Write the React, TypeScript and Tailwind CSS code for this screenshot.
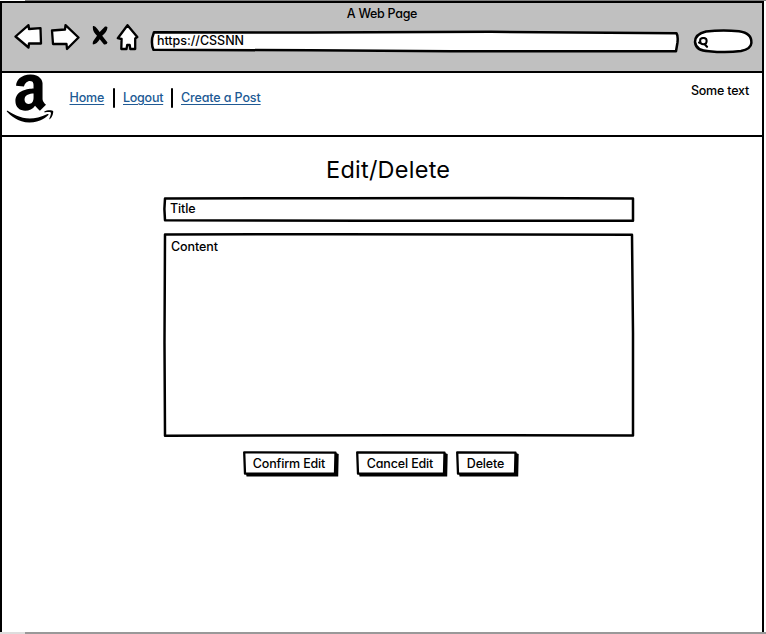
import type { ReactNode } from "react";
import { FaAmazon } from "react-icons/fa";

type OutlineProps = { w: number; h: number; d: string; stroke?: number; fill?: string };

// Hand-drawn frame placed behind the content of a control.
function Outline({ w, h, d, stroke = 2.5, fill = "white" }: OutlineProps) {
  return (
    <svg
      className="pointer-events-none absolute inset-0 overflow-visible"
      width={w}
      height={h}
      viewBox={`0 0 ${w} ${h}`}
      aria-hidden="true"
    >
      <path d={d} fill={fill} stroke="black" strokeWidth={stroke} strokeLinejoin="round" strokeLinecap="round" />
    </svg>
  );
}

function NavIcon({ d, className, w, h }: { d: string; className: string; w: number; h: number }) {
  return (
    <svg className={className} width={w} height={h} viewBox={`0 0 ${w} ${h}`} aria-hidden="true">
      <path d={d} fill="white" stroke="black" strokeWidth="2.3" strokeLinejoin="round" />
    </svg>
  );
}

function BrowserBar() {
  return (
    <header className="h-[70px] border-b-2 border-black bg-[#c0c0c0]">
      <div className="flex h-[21px] items-center justify-center pt-px">
        <span className="tracking-[-0.3px]">A Web Page</span>
      </div>
      <div className="flex h-[36px] items-start">
        <NavIcon className="ml-[12px]" w={29} h={27} d="M1.5 12.5 L14.5 1.2 L15 5 L26.5 4.2 L27 19.5 L15 19.5 L14.5 23.5 Z" />
        <NavIcon className="ml-[7px]" w={30} h={28} d="M2 6.5 L15 5.5 L15.5 1.2 L28.5 13.5 L17 25 L16.5 20 L3 20 Z" />
        <svg className="mt-[2px] ml-[11px]" width="18" height="20" viewBox="0 0 18 20" aria-hidden="true">
          <path d="M2 0 Q4 -.3 6 2.5 L8.7 6 L14 .5 Q16 0 16.5 1.5 Q16 6 11.2 9.7 L16.5 16.5 Q16 19 13 18.5 L8.7 13.2 Q6 18 2 18.5 Q1.3 17.5 2.3 15 L6 9.7 Q1 5 2 0Z" />
        </svg>
        <NavIcon className="ml-[7px]" w={24} h={28} d="M11.5 1.2 L21.3 13 L19.2 14.5 L19.2 25 L14.3 25 L13.7 21 L11.2 21 L10.5 25 L5.3 25 L5.6 15 L1.8 14.2 Z" />
        <div className="relative mt-[7px] ml-[11px] flex h-[21px] w-[528px] items-center pb-[2px] pl-[6px]">
          <Outline w={528} h={21} d="M3 1.2 L160 1.5 L340 .8 L525.5 2.3 Q527.3 5 526.4 12 L525 20.3 L300 20.2 L160 19.3 L2.5 18.8 Q.3 15 1.2 7Z" />
          <span className="relative tracking-[-0.03px]">https://CSSNN</span>
        </div>
        <div className="relative mt-[5px] ml-[15px] h-[24px] w-[59px]">
          <Outline w={59} h={24} d="M12 2.5 Q28 .6 45 2.2 Q58 4 57.4 14 Q57 20 47 22 Q32 24 15 22.2 Q2 22 1 13 Q1 5 12 2.5Z" />
          <svg className="relative mt-[8px] ml-[4px]" width="12" height="13" viewBox="0 0 12 13" aria-hidden="true">
            <path d="M2.6 1.8 Q5.5 .2 8 1.8 Q9.2 4 8 6.3 Q5 8.2 2.8 6.3 L1 5.6 M2.8 6.3 Q1.6 4 2.6 1.8 M6.6 7.2 L9 9.8" fill="none" stroke="black" strokeWidth="2.1" strokeLinecap="round" />
          </svg>
        </div>
      </div>
    </header>
  );
}

function SiteHeader() {
  return (
    <nav className="flex h-[64px] items-start border-b-2 border-black">
      <FaAmazon className="mt-[-2px] ml-[4px] h-[55px] w-[48px] shrink-0" />
      <div className="mt-[15px] ml-[15.5px] flex h-[20px] items-center text-[#205a94]">
        <a className="w-[35px] tracking-[-0.15px] whitespace-nowrap underline underline-offset-2">Home</a>
        <i className="ml-[8.5px] h-[20px] w-[2px] rounded bg-black" />
        <a className="ml-[8px] w-[41px] tracking-[-0.25px] whitespace-nowrap underline underline-offset-2">Logout</a>
        <i className="ml-[7px] h-[20px] w-[2px] rounded bg-black" />
        <a className="ml-[8px] tracking-[-0.12px] whitespace-nowrap underline underline-offset-2">Create a Post</a>
      </div>
      <span className="mt-[10px] mr-[13px] ml-auto tracking-[-0.22px]">Some text</span>
    </nav>
  );
}

function SketchButton({ w, className, children }: { w: number; className: string; children: ReactNode }) {
  return (
    <button className={`relative flex h-[26px] items-center justify-center pr-[4px] whitespace-nowrap ${className}`}>
      <svg className="absolute inset-0" width={w} height="26" viewBox={`0 0 ${w} 26`} aria-hidden="true">
        <path d={`M3 22 L${w - 4} 22 L${w - 3} 2 L${w - 0.3} 3 L${w - 0.8} 25.6 L3.5 25.6Z`} />
        <path d={`M1.2 1.3 L${w - 3.5} 1.7 L${w - 4} 22.7 L2 22.7Z`} fill="white" stroke="black" strokeWidth="2.3" strokeLinejoin="round" />
      </svg>
      <span className="relative">{children}</span>
    </button>
  );
}

export default function App() {
  return (
    <div className="h-[634px] w-[766px] overflow-hidden bg-white font-['Inter',sans-serif] text-[12.5px] leading-[16px] font-[450] text-black [font-feature-settings:'cv11'] [font-synthesis:none]">
      <div className="h-px bg-gradient-to-r from-white from-[25px] to-[#808080] to-[25px]" />
      <div className="h-[631px] w-[764px] border-x-2 border-t-2 border-black">
        <BrowserBar />
        <SiteHeader />
        <main className="flex flex-col pl-[161px]">
          <h1 className="mt-[18px] ml-[163px] h-[30px] text-[23.5px] leading-[30px] font-normal tracking-[0.25px] whitespace-nowrap">Edit/Delete</h1>
          <div className="relative mt-[12px] h-[25px] w-[471px] pt-[4px] pl-[7px]">
            <Outline w={471} h={25} d="M2 1.5 L180 1.2 L330 .9 L470 1.5 L470 23.8 L200 23.8 L2 23.3 L1.4 12Z" />
            <span className="relative tracking-[-0.1px]">Title</span>
          </div>
          <div className="relative mt-[11px] h-[204px] w-[471px] pt-[6px] pl-[8px]">
            <Outline w={471} h={204} d="M2 1.5 L170 1.2 L469 1.8 L470 100 L470 202.5 L240 202.2 L2 202.8 L1.5 110Z" />
            <span className="relative tracking-[-0.08px]">Content</span>
          </div>
          <div className="mt-[14px] ml-[80px] flex tracking-[-0.15px]">
            <SketchButton w={96} className="w-[96px]">Confirm Edit</SketchButton>
            <SketchButton w={92} className="ml-[17px] w-[92px]">Cancel Edit</SketchButton>
            <SketchButton w={63} className="ml-[8px] w-[63px]">Delete</SketchButton>
          </div>
        </main>
      </div>
      <div className="h-[2px] bg-gradient-to-r from-[#dddddd] from-[25px] to-[#999999] to-[25px]" />
    </div>
  );
}
